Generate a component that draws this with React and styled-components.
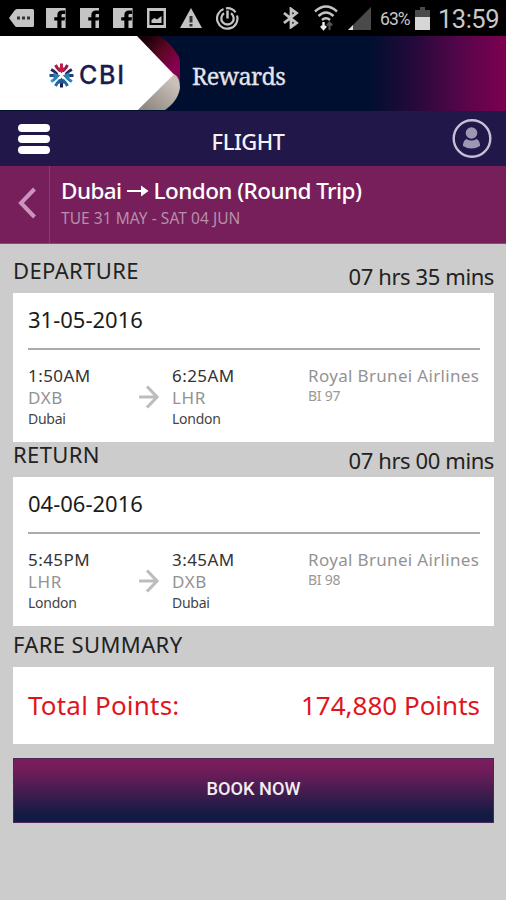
import styled, { createGlobalStyle, css } from 'styled-components'

const GlobalStyle = createGlobalStyle`
    * { box-sizing: border-box; }

    body {
        margin: 0;
        background: #cccccc;
        color: #222;
        font-family: 'Noto Sans', 'Open Sans', sans-serif;
    }

    svg { display: block; flex: none; }
`

const Screen = styled.div`
    width: 506px;
    height: 900px;
    overflow: hidden;
    background: #cccccc;
`

/* status bar */

const StatusBar = styled.div`
    display: flex;
    justify-content: space-between;
    height: 36px;
    padding: 0 7px 0 9px;
    background: #000;
    color: #c8c8c8;
    font-family: Roboto, sans-serif;
`

const StatusGroup = styled.div`
    display: flex;
    align-items: center;
    gap: ${ ({ $gap }) => $gap }px;
`

const TagIcon = styled.svg`
    margin-right: -2px;
`

const WifiIcon = styled.svg`
    margin-left: 3px;
`

const SignalIcon = styled.svg`
    margin: 0 2px 0 -2px;
`

const Battery = styled.span`
    width: 32px;
    margin: 1px -9px 0 -5px;
    font-size: 17.5px;
    letter-spacing: -0.9px;
    white-space: nowrap;
`

const Clock = styled.span`
    width: 61px;
    margin: 2px 0 0 -4px;
    font-size: 25.5px;
    letter-spacing: -0.5px;
    white-space: nowrap;
`

const FacebookIcon = () => (
    <svg width="19.600" height="20" viewBox="0 0 19 20" preserveAspectRatio="none">
        <path fill="#c4c4c4" d="M0 0h19v20h-4v-7.500h3l.5-3.300h-3.500V7.500c0-1.100.5-1.500 1.500-1.500h2V2.500h-3c-3 0-4.500 1.700-4.500 4.400v2.300H8v3.300h3V20H0z" />
    </svg>
)

const StatusIcons = () => (
    <StatusGroup $gap={14}>
        <TagIcon width="25" height="18" viewBox="0 0 25 18">
            <path fill="#c4c4c4" d="M8 0h15.500Q25 0 25 1.500v15q0 1.500-1.500 1.500H8Q6.500 18 5.500 16.500L0 9l5.500-7.500Q6.500 0 8 0z" />
            <path fill="#333" d="M8 7.500h3v3H8zM13 7.500h3v3h-3zM18 7.500h3v3h-3z" />
        </TagIcon>
        <FacebookIcon />
        <FacebookIcon />
        <FacebookIcon />
        <svg width="19" height="20" viewBox="0 0 19 20">
            <path fill="#c4c4c4" fillRule="evenodd" d="M0 0h19v20H0zM2.500 3v14h14V3z" />
            <path fill="#c4c4c4" d="M4.500 15v-3l3-2 2.500 1.500L14.500 8v7z" />
        </svg>
        <svg width="22" height="20" viewBox="0 0 22 20">
            <path fill="#c4c4c4" d="M11 0l11 20H0z" />
            <path fill="#333" d="M9.500 8h3v6.500h-3zM9.500 16h3v2.500h-3z" />
        </svg>
        <svg width="23" height="23" viewBox="0 0 23 23" fill="none" stroke="#c4c4c4">
            <path strokeWidth="2.200" d="M7.500 2A10.200 10.200 0 1 0 21 8.500M10 1.300a10.200 10.200 0 0 1 9.500 4" />
            <path strokeWidth="2.300" d="M8 6.200a6.200 6.200 0 1 0 7 0" />
            <path strokeWidth="2.500" d="M11.500 3.500v8" />
        </svg>
    </StatusGroup>
)

const StatusInfo = () => (
    <StatusGroup $gap={12}>
        <svg width="16" height="22" viewBox="0 0 16 22" fill="none" stroke="#c4c4c4" strokeWidth="2.800">
            <path d="M1 6l12.500 10L8 20V2l5.500 4L1 16" />
        </svg>
        <WifiIcon width="24" height="26" viewBox="0 0 24 26" fill="none" stroke="#c4c4c4" strokeWidth="2.500">
            <path d="M1 6.500q11-10 22 0M4.500 11q7.500-7 15 0M8 15q4-3.500 8 0" />
            <path stroke="#eee" strokeWidth="2.400" d="M9.500 17v7M7 21l2.500 3 2.500-3" />
            <path stroke="#555" strokeWidth="2" d="M15.500 25v-7M13 20.500l2.500-3 2.500 3" />
        </WifiIcon>
        <SignalIcon width="23" height="23" viewBox="0 0 23 23">
            <path fill="#4a4a4a" d="M23 0v23H0z" />
            <path fill="#ddd" d="M5 18v5H0z" />
        </SignalIcon>
        <Battery>63%</Battery>
        <svg width="15" height="23" viewBox="0 0 15 23">
            <path fill="#4a4a4a" d="M5 0h5v3h5v8H0V3h5z" />
            <path fill="#d6d6d6" d="M0 10h15v13H0z" />
        </svg>
        <Clock>13:59</Clock>
    </StatusGroup>
)

/* brand header */

const LayoutHeader = styled.header`
    display: grid;
    grid-template-columns: 182px 1fr;
    align-items: center;
    height: 75px;
    background: linear-gradient(90deg, #000f2f 0 73%, #26093b 82%, #55064a 91%, #7d0050 100%);
`

const LogoCell = styled.div`
    position: relative;
    display: flex;
    align-items: center;
    gap: 5px;
    height: 75px;
    padding-left: 49px;
`

const LogoShape = styled.svg`
    position: absolute;
    top: 0;
    left: 0;
`

const LogoMark = styled.svg`
    position: relative;
    margin-top: 3px;
`

const LogoText = styled.span`
    position: relative;
    margin-top: 2px;
    color: #1c1b50;
    font: 500 25px/28px Inter, sans-serif;
    letter-spacing: 1.7px;
    -webkit-text-stroke: 0.3px #1c1b50;
`

const Brand = styled.h1`
    margin: 5px 0 0 10px;
    color: #e3e5ec;
    font: 400 23.5px/32px 'Noto Serif', 'DejaVu Serif', serif;
    letter-spacing: -0.6px;
    -webkit-text-stroke: 0.3px #e3e5ec;
`

const rays = [
    [0, '#c51a4c'], [30, '#8b1d54'], [60, '#27265f'], [90, '#1c3f7c'], [120, '#2a7fb8'], [150, '#2369a5'],
    [180, '#1a1c52'], [210, '#2369a5'], [240, '#3198cb'], [270, '#1d4d8b'], [300, '#27265f'], [330, '#a71d50'],
]

const Header = () => (
    <LayoutHeader>
        <LogoCell>
            <LogoShape width="182" height="75" viewBox="0 0 182 75">
                <defs>
                    <linearGradient id="fold" x1="0" y1="0" x2="1" y2="1">
                        <stop offset="0.15" stopColor="#1a0008" />
                        <stop offset="0.45" stopColor="#5c0722" />
                        <stop offset="0.75" stopColor="#860050" />
                    </linearGradient>
                    <linearGradient id="shade" x1="0" y1="1" x2="1" y2="0">
                        <stop offset="0.1" stopColor="#8f8782" />
                        <stop offset="0.8" stopColor="#c9c0b9" />
                    </linearGradient>
                </defs>
                <path fill="url(#fold)" d="M136 0h23c8 4 15 12 20 21q1 3 1 7v20l-6-9z" />
                <path fill="url(#shade)" d="M174 38q6 3 6 14c-2 11-8 17-15 22h-27z" />
                <path fill="#fff" d="M0 0h137l37 38.500L138 74H0z" />
            </LogoShape>
            <LogoMark width="25" height="25" viewBox="-12.500 -12.500 25 25">
                {rays.map(([angle, color]) => (
                    <path key={angle} d="M0-4v-8" stroke={color} strokeWidth="3" transform={`rotate(${angle})`} />
                ))}
                <path d="M-4-8h8L0-2z" fill="#c51a4c" />
                <path d="M-8-3l7 3-7 6zM8-3L1 0l7 6z" fill="#2a7fb8" />
                <path d="M-4 8h8L0 2z" fill="#1f5a97" />
                <path d="M-6-6L7 7M6-6L-7 7" stroke="#fff" strokeWidth="1.700" />
            </LogoMark>
            <LogoText>CBI</LogoText>
        </LogoCell>
        <Brand>Rewards</Brand>
    </LayoutHeader>
)

/* title bar */

const NavBar = styled.nav`
    display: grid;
    grid-template-columns: 46px 1fr 60px;
    align-items: center;
    height: 55px;
    padding: 0 14px 0 18px;
    background: #211749;
    color: #f4f2f8;
`

const MenuButton = styled.div`
    display: grid;
    gap: 3px;
    width: 32px;

    & span {
        height: 8px;
        border-radius: 4px;
        background: #fff;
    }
`

const Title = styled.h2`
    margin: 4px 0 0;
    text-align: center;
    font-size: 22px;
    font-weight: 500;
    line-height: 30px;
    letter-spacing: -0.5px;
`

const ProfileIcon = styled.svg`
    justify-self: end;
`

const Nav = () => (
    <NavBar>
        <MenuButton>
            <span />
            <span />
            <span />
        </MenuButton>
        <Title>FLIGHT</Title>
        <ProfileIcon width="40" height="40" viewBox="0 0 40 40">
            <circle cx="20" cy="19.500" r="18.300" fill="none" stroke="#c5c0d5" strokeWidth="2.400" />
            <circle cx="19.500" cy="14" r="5.800" fill="#9d97b4" />
            <path fill="#9d97b4" d="M14.500 20q5 3 10 0 3.500 1.500 3.500 7-8.500 5-17 0 0-5.500 3.500-7z" />
        </ProfileIcon>
    </NavBar>
)

const TripBar = styled.section`
    display: flex;
    height: 78px;
    border-bottom: 1px solid #8d4a75;
    background: #771f5b;
    color: #fff;
`

const Back = styled.div`
    display: grid;
    place-items: center;
    width: 50px;
    padding: 0 0 4px 4px;
    border-right: 1px solid #8a3a70;
`

const Trip = styled.div`
    padding: 9px 0 0 11px;
    white-space: nowrap;
`

const Route = styled.div`
    display: flex;
    align-items: center;
    gap: 5px;
    font-size: 22.5px;
    font-weight: 500;
    line-height: 32px;
    letter-spacing: -0.57px;
`

const TripDates = styled.div`
    margin-top: -1px;
    color: #b58fab;
    font-size: 15.5px;
    line-height: 24px;
    letter-spacing: 0.05px;
`

const TripHeader = () => (
    <TripBar>
        <Back>
            <svg width="18" height="32" viewBox="0 0 18 32" fill="none" stroke="#cb94bc" strokeWidth="4">
                <path d="M16.500 2L3 16l13.500 14" />
            </svg>
        </Back>
        <Trip>
            <Route>
                <span>Dubai</span>
                <svg width="22" height="12" viewBox="0 0 22 12">
                    <path fill="#fff" d="M0 5h14V.5L21.500 6 14 11.500V7H0z" />
                </svg>
                <span>London (Round Trip)</span>
            </Route>
            <TripDates>TUE 31 MAY - SAT 04 JUN</TripDates>
        </Trip>
    </TripBar>
)

/* flights */

const Content = styled.main`
    padding: 0 12px 0 13px;
`

const SectionHead = styled.div`
    display: flex;
    align-items: flex-end;
    justify-content: space-between;
    height: ${ ({ $height }) => $height }px;
    font-size: 22px;
    line-height: 30px;
    letter-spacing: 0.38px;
    white-space: nowrap;
`

const SectionName = styled.span`
    margin-bottom: 8px;
`

const Duration = styled.span`
    margin-bottom: 2px;
    letter-spacing: -0.4px;
`

const Card = styled.div`
    padding: 0 14px 0 15px;
    background: #fff;
`

const FlightBox = styled(Card)`
    height: 149px;
`

const FlightDate = styled.div`
    height: 57px;
    padding-top: 11px;
    border-bottom: 2px solid #aaa;
    color: #1c1c1c;
    font-size: 22px;
    line-height: 30px;
`

const Legs = styled.div`
    display: grid;
    grid-template-columns: 110px 34px 136px 1fr;
    padding-top: 15px;
    white-space: nowrap;
`

const small = css`
    font-size: 14px;
    line-height: 20px;
    letter-spacing: -0.25px;
`

const Time = styled.div`
    color: #333;
    font-size: 17px;
    line-height: 22px;
    letter-spacing: 0.45px;
`

const Code = styled.div`
    color: #929292;
    font-size: 17px;
    line-height: 22px;
    letter-spacing: 0.6px;
`

const City = styled.div`
    ${ small }
    color: #444;
`

const Airline = styled.div`
    color: #939393;
    font-size: 17px;
    line-height: 22px;
    letter-spacing: 0.33px;
`

const FlightNo = styled.div`
    ${ small }
    margin-top: -1px;
    color: #999;
`

const LegArrow = styled.svg`
    margin-top: 20px;
`

const Stop = ({ time, code, city }) => (
    <div>
        <Time>{time}</Time>
        <Code>{code}</Code>
        <City>{city}</City>
    </div>
)

const Flight = ({ date, from, to, airline, number }) => (
    <FlightBox>
        <FlightDate>{date}</FlightDate>
        <Legs>
            <Stop {...from} />
            <LegArrow width="22" height="24" viewBox="0 0 22 24" fill="none" stroke="#bdbdbd" strokeWidth="3.200">
                <path d="M1 12h18M9 1.500L19 12 9 22.500" />
            </LegArrow>
            <Stop {...to} />
            <div>
                <Airline>{airline}</Airline>
                <FlightNo>{number}</FlightNo>
            </div>
        </Legs>
    </FlightBox>
)

const Fare = styled(Card)`
    display: flex;
    justify-content: space-between;
    height: 77px;
    padding-top: 20px;
    color: #e0141c;
    font-size: 26px;
    line-height: 36px;
    letter-spacing: 0.2px;
`

const Points = styled.span`
    letter-spacing: 0;
`

const BookButton = styled.button`
    display: block;
    width: 100%;
    height: 65px;
    margin-top: 14px;
    padding: 0 0 4px;
    border: 1px solid #4d2757;
    background: linear-gradient(#7b1d5d, #741d5b 15%, #111b43 90%);
    color: #f3edf4;
    font: 500 18.200px/24px Roboto, sans-serif;
`

const App = () => (
    <Screen>
        <GlobalStyle />
        <StatusBar>
            <StatusIcons />
            <StatusInfo />
        </StatusBar>
        <Header />
        <Nav />
        <TripHeader />
        <Content>
            <SectionHead $height={49}>
                <SectionName>DEPARTURE</SectionName>
                <Duration>07 hrs 35 mins</Duration>
            </SectionHead>
            <Flight
                date="31-05-2016"
                from={{ time: '1:50AM', code: 'DXB', city: 'Dubai' }}
                to={{ time: '6:25AM', code: 'LHR', city: 'London' }}
                airline="Royal Brunei Airlines"
                number="BI 97"
            />
            <SectionHead $height={35}>
                <SectionName>RETURN</SectionName>
                <Duration>07 hrs 00 mins</Duration>
            </SectionHead>
            <Flight
                date="04-06-2016"
                from={{ time: '5:45PM', code: 'LHR', city: 'London' }}
                to={{ time: '3:45AM', code: 'DXB', city: 'Dubai' }}
                airline="Royal Brunei Airlines"
                number="BI 98"
            />
            <SectionHead $height={41}>
                <SectionName>FARE SUMMARY</SectionName>
            </SectionHead>
            <Fare>
                <span>Total Points:</span>
                <Points>174,880 Points</Points>
            </Fare>
            <BookButton>BOOK NOW</BookButton>
        </Content>
    </Screen>
)

export default App
